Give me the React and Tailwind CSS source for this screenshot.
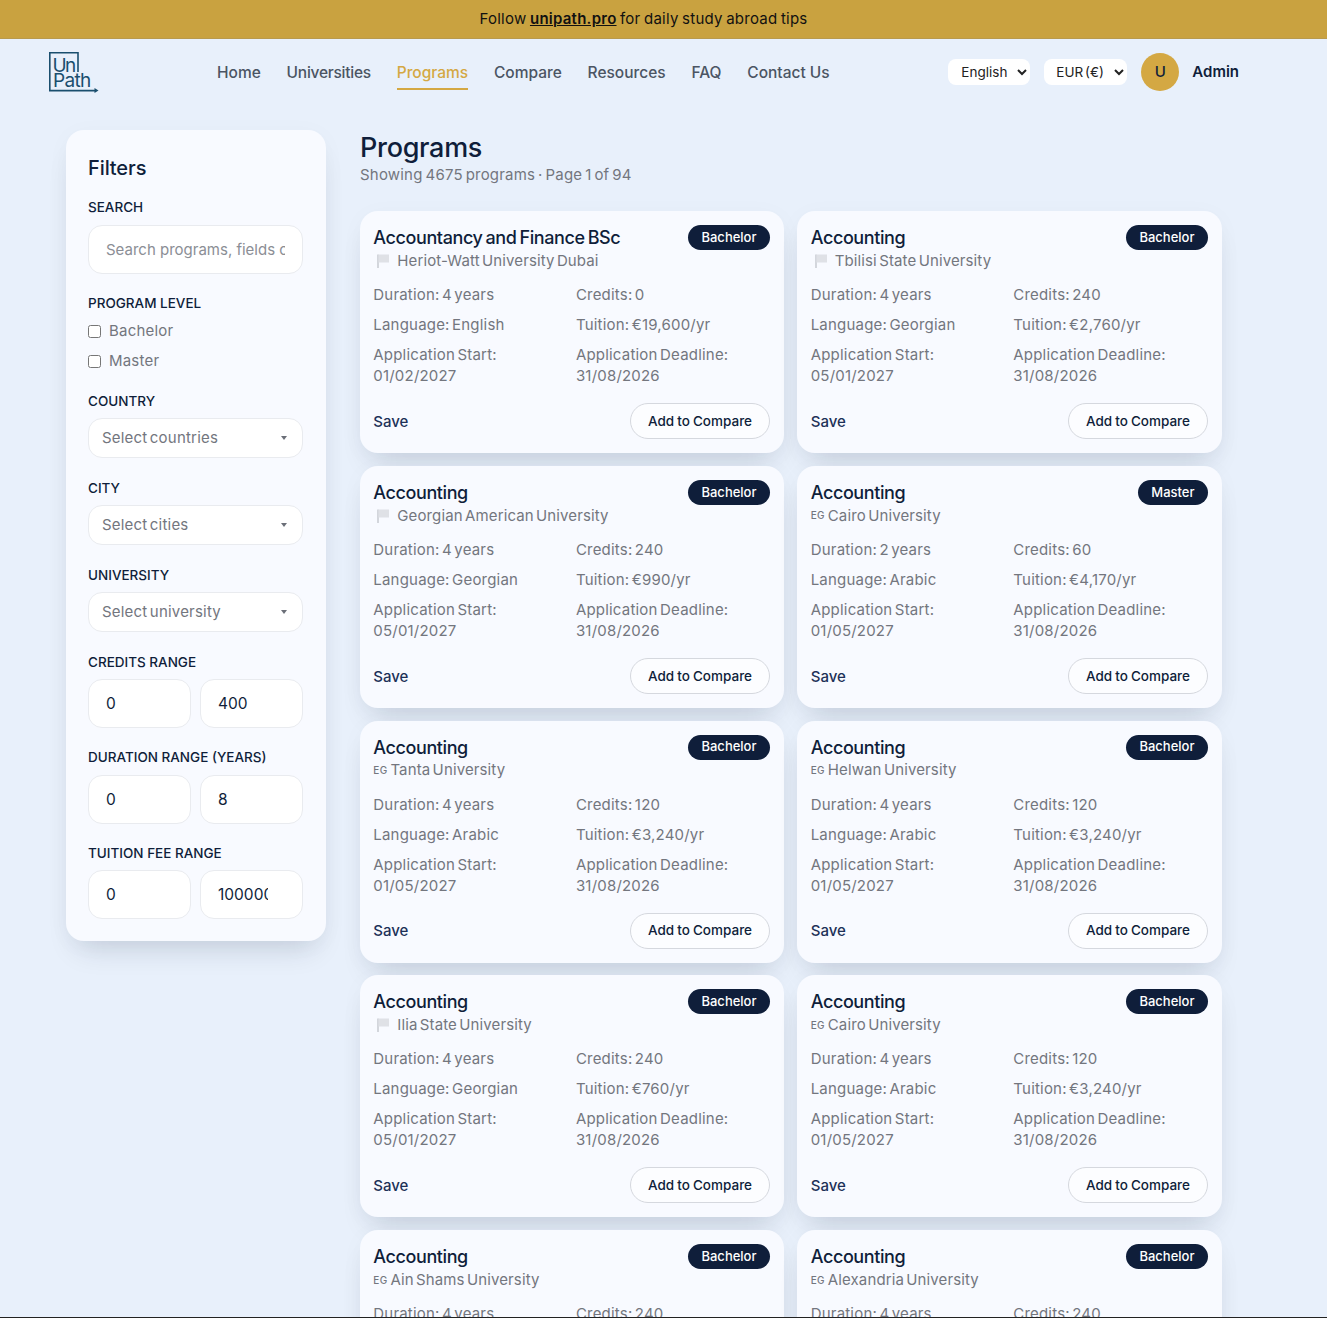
const navLinks = ["Home", "Universities", "Programs", "Compare", "Resources", "FAQ", "Contact Us"];

const programs = [
  { title: "Accountancy and Finance BSc", level: "Bachelor", uni: "Heriot-Watt University Dubai", flag: "", duration: "4 years", credits: "0", language: "English", tuition: "€19,600/yr", start: "01/02/2027" },
  { title: "Accounting", level: "Bachelor", uni: "Tbilisi State University", flag: "", duration: "4 years", credits: "240", language: "Georgian", tuition: "€2,760/yr", start: "05/01/2027" },
  { title: "Accounting", level: "Bachelor", uni: "Georgian American University", flag: "", duration: "4 years", credits: "240", language: "Georgian", tuition: "€990/yr", start: "05/01/2027" },
  { title: "Accounting", level: "Master", uni: "Cairo University", flag: "EG", duration: "2 years", credits: "60", language: "Arabic", tuition: "€4,170/yr", start: "01/05/2027" },
  { title: "Accounting", level: "Bachelor", uni: "Tanta University", flag: "EG", duration: "4 years", credits: "120", language: "Arabic", tuition: "€3,240/yr", start: "01/05/2027" },
  { title: "Accounting", level: "Bachelor", uni: "Helwan University", flag: "EG", duration: "4 years", credits: "120", language: "Arabic", tuition: "€3,240/yr", start: "01/05/2027" },
  { title: "Accounting", level: "Bachelor", uni: "Ilia State University", flag: "", duration: "4 years", credits: "240", language: "Georgian", tuition: "€760/yr", start: "05/01/2027" },
  { title: "Accounting", level: "Bachelor", uni: "Cairo University", flag: "EG", duration: "4 years", credits: "120", language: "Arabic", tuition: "€3,240/yr", start: "01/05/2027" },
  { title: "Accounting", level: "Bachelor", uni: "Ain Shams University", flag: "EG", duration: "4 years", credits: "240", language: "Arabic", tuition: "€3,240/yr", start: "01/05/2027" },
  { title: "Accounting", level: "Bachelor", uni: "Alexandria University", flag: "EG", duration: "4 years", credits: "240", language: "Arabic", tuition: "€3,240/yr", start: "01/05/2027" },
];

const Logo = () => (
  <svg width="50" height="41" viewBox="0 0 50 41" fill="none">
    <path d="M29 20V0.8H0.8V38.6H47" stroke="#1a4f6e" strokeWidth="1.6" />
    <path d="M45.5 36L49.5 38.6L45.5 41Z" fill="#1a4f6e" />
    <text x="3.5" y="19.5" fontSize="19" letterSpacing="-1.6" fill="#1a4f6e" fontFamily="Inter, sans-serif">Un</text>
    <text x="4" y="35" fontSize="19" letterSpacing="-0.7" fill="#1a4f6e" fontFamily="Inter, sans-serif">Path</text>
  </svg>
);

const FlagIcon = () => (
  <svg width="14" height="16" viewBox="0 0 14 16" className="ml-[4px] mr-[6px] shrink-0">
    <path d="M1 1.5V15" stroke="#aeb2b9" strokeWidth="1" />
    <path d="M1.5 1.5H12V9.5H1.5Z" fill="#dfe1e6" />
  </svg>
);

const FilterLabel = ({ children, className = "mb-[8px]" }) => (
  <div className={`text-[13.5px] font-medium text-[#0f1e3a] leading-[18px] ${className}`}>{children}</div>
);

const FakeSelect = ({ text }) => (
  <div className="h-[40px] bg-white border border-[#e9ebef] rounded-[14px] px-[13px] flex items-center justify-between text-[15px] tracking-[0.2px] [word-spacing:-2px] text-[#73767e]">
    <span className="pt-[1px]">{text}</span>
    <span className="mr-[2px] w-0 h-0 border-x-[3px] border-x-transparent border-t-[4px] border-t-[#6b6f78]" />
  </div>
);

const RangeInputs = ({ min, max }) => (
  <div className="flex gap-[9px]">
    {[min, max].map((v, i) => (
      <input
        key={i}
        readOnly
        value={v}
        className="min-w-0 w-full h-[48.5px] bg-white border border-[#e9ebef] rounded-[14px] pl-[17px] pr-[34px] text-[15.5px] text-[#0f1e3a] outline-none"
      />
    ))}
  </div>
);

const Sidebar = () => (
  <aside className="w-[260px] h-[811px] shrink-0 bg-[#f8faff] rounded-[18px] pl-[22px] pr-[23px] pt-[25px] shadow-[0_18px_30px_-12px_rgba(15,30,58,0.16),0_4px_24px_rgba(15,30,58,0.03)]">
    <h2 className="text-[20px] font-medium tracking-[-0.1px] text-[#0f1e3a] leading-[26px] mb-[17px]">Filters</h2>
    <FilterLabel className="mb-[9px]">SEARCH</FilterLabel>
    <input
      placeholder="Search programs, fields of study"
      className="w-full h-[49px] bg-white border border-[#e9ebef] rounded-[14px] px-[17px] text-[15px] outline-none placeholder:text-[#8b8e95]"
    />
    <div className="mt-[20px]">
      <FilterLabel className="mb-[4px]">PROGRAM LEVEL</FilterLabel>
      {["Bachelor", "Master"].map((l) => (
        <label key={l} className="flex items-center h-[30px] text-[15px] tracking-[0.2px] text-[#73767e]">
          <input type="checkbox" className="w-[13px] h-[13px] mr-[8px] m-0" />
          {l}
        </label>
      ))}
    </div>
    <div className="mt-[16px]">
      <FilterLabel>COUNTRY</FilterLabel>
      <FakeSelect text="Select countries" />
    </div>
    <div className="mt-[21px]">
      <FilterLabel>CITY</FilterLabel>
      <FakeSelect text="Select cities" />
    </div>
    <div className="mt-[21px]">
      <FilterLabel>UNIVERSITY</FilterLabel>
      <FakeSelect text="Select university" />
    </div>
    <div className="mt-[21px]">
      <FilterLabel>CREDITS RANGE</FilterLabel>
      <RangeInputs min="0" max="400" />
    </div>
    <div className="mt-[20.5px]">
      <FilterLabel className="mb-[9px]">DURATION RANGE (YEARS)</FilterLabel>
      <RangeInputs min="0" max="8" />
    </div>
    <div className="mt-[20.5px]">
      <FilterLabel>TUITION FEE RANGE</FilterLabel>
      <RangeInputs min="0" max="100000" />
    </div>
  </aside>
);

const ProgramCard = ({ p }) => (
  <div className="h-[242px] bg-[#f8faff] rounded-[18px] pl-[13.3px] pr-[14px] pt-[14px] shadow-[0_18px_30px_-12px_rgba(15,30,58,0.16),0_4px_24px_rgba(15,30,58,0.03)] flex flex-col">
    <div className="flex justify-between items-start h-[25px]">
      <h3 className="text-[18px] font-medium tracking-[-0.4px] [word-spacing:-1.4px] text-[#0f1e3a] leading-[25px]">{p.title}</h3>
      <span className="h-[25px] px-[13.5px] rounded-full bg-[#0f1e3a] text-white text-[13px] font-medium flex items-center">{p.level}</span>
    </div>
    <div className="flex items-center h-[22px] text-[15px] tracking-[0.12px] [word-spacing:-2px] text-[#73767e]">
      {p.flag ? <span className="text-[10px] tracking-[0.3px] font-medium mr-[3px]">{p.flag}</span> : <FlagIcon />}
      {p.uni}
    </div>
    <div className="grid grid-cols-[202.6px_1fr] mt-[12px] text-[15px] tracking-[0.2px] [word-spacing:-2px] text-[#73767e] leading-[21px] gap-y-[9px]">
      <div>Duration: {p.duration}</div>
      <div>Credits: {p.credits}</div>
      <div>Language: {p.language}</div>
      <div>Tuition: {p.tuition}</div>
      <div>Application Start:<br />{p.start}</div>
      <div>Application Deadline:<br />31/08/2026</div>
    </div>
    <div className="flex justify-between items-center mt-[17px]">
      <span className="text-[15px] font-medium text-[#1d3158] pt-[2px]">Save</span>
      <button className="h-[36px] w-[140px] border border-[#d5d8de] rounded-full bg-white/60 text-[13.5px] font-medium [word-spacing:-0.5px] text-[#0f1e3a]">
        Add to Compare
      </button>
    </div>
  </div>
);

export default function App() {
  return (
    <div className="relative h-[1318px] overflow-hidden bg-[#e8f0fb] font-['Inter',sans-serif] border-b border-[#222]">
      <div className="h-[39px] bg-[#c9a240] flex items-center justify-center pr-[40px] text-[15px] tracking-[0.25px] [word-spacing:-1px] text-[#111] border-b border-[#b89a4e]">
        Follow&nbsp;<a className="font-semibold underline">unipath.pro</a>&nbsp;for daily study abroad tips
      </div>

      <header className="h-[66px] flex items-center pl-[49px] pr-[88px]">
        <Logo />
        <nav className="flex ml-[118px] gap-[25.8px] text-[15.5px] font-medium text-[#4b5563]">
          {navLinks.map((l) =>
            l === "Programs" ? (
              <a key={l} className="text-[#d4a843] h-[35px] leading-[36px] border-b-2 border-[#d4a843] mt-[1px]">{l}</a>
            ) : (
              <a key={l} className={l === "Universities" ? "h-[36px] leading-[36px] mt-[1px] tracking-[-0.25px]" : "h-[36px] leading-[36px] mt-[1px]"}>{l}</a>
            )
          )}
        </nav>
        <div className="ml-auto flex items-center">
          <select className="h-[26px] w-[82px] bg-white rounded-[8px] pl-[9px] text-[13.5px] text-[#222] outline-none">
            <option>English</option>
          </select>
          <select className="h-[26px] w-[83px] ml-[14px] bg-white rounded-[8px] pl-[8px] text-[13.5px] [word-spacing:-2px] text-[#222] outline-none">
            <option>EUR (€)</option>
          </select>
          <div className="w-[38px] h-[38px] ml-[14px] rounded-full bg-[#d4a843] flex items-center justify-center text-[15px] font-medium text-[#0f1e3a]">U</div>
          <span className="ml-[13px] text-[15px] font-semibold text-[#0f1e3a]">Admin</span>
        </div>
      </header>

      <main className="flex pl-[66px] pt-[25px] gap-[34px]">
        <Sidebar />
        <section className="w-[862px]">
          <h1 className="text-[27px] font-medium tracking-[-0.3px] text-[#0f1e3a] leading-[36px]">Programs</h1>
          <p className="text-[15px] tracking-[0.2px] [word-spacing:-1.5px] text-[#73767e] leading-[20px] mt-[-1px]">Showing 4675 programs · Page 1 of 94</p>
          <div className="grid grid-cols-[424px_424.6px] gap-x-[13.4px] gap-y-[12.8px] mt-[26px]">
            {programs.map((p, i) => (
              <ProgramCard key={i} p={p} />
            ))}
          </div>
        </section>
      </main>
    </div>
  );
}
